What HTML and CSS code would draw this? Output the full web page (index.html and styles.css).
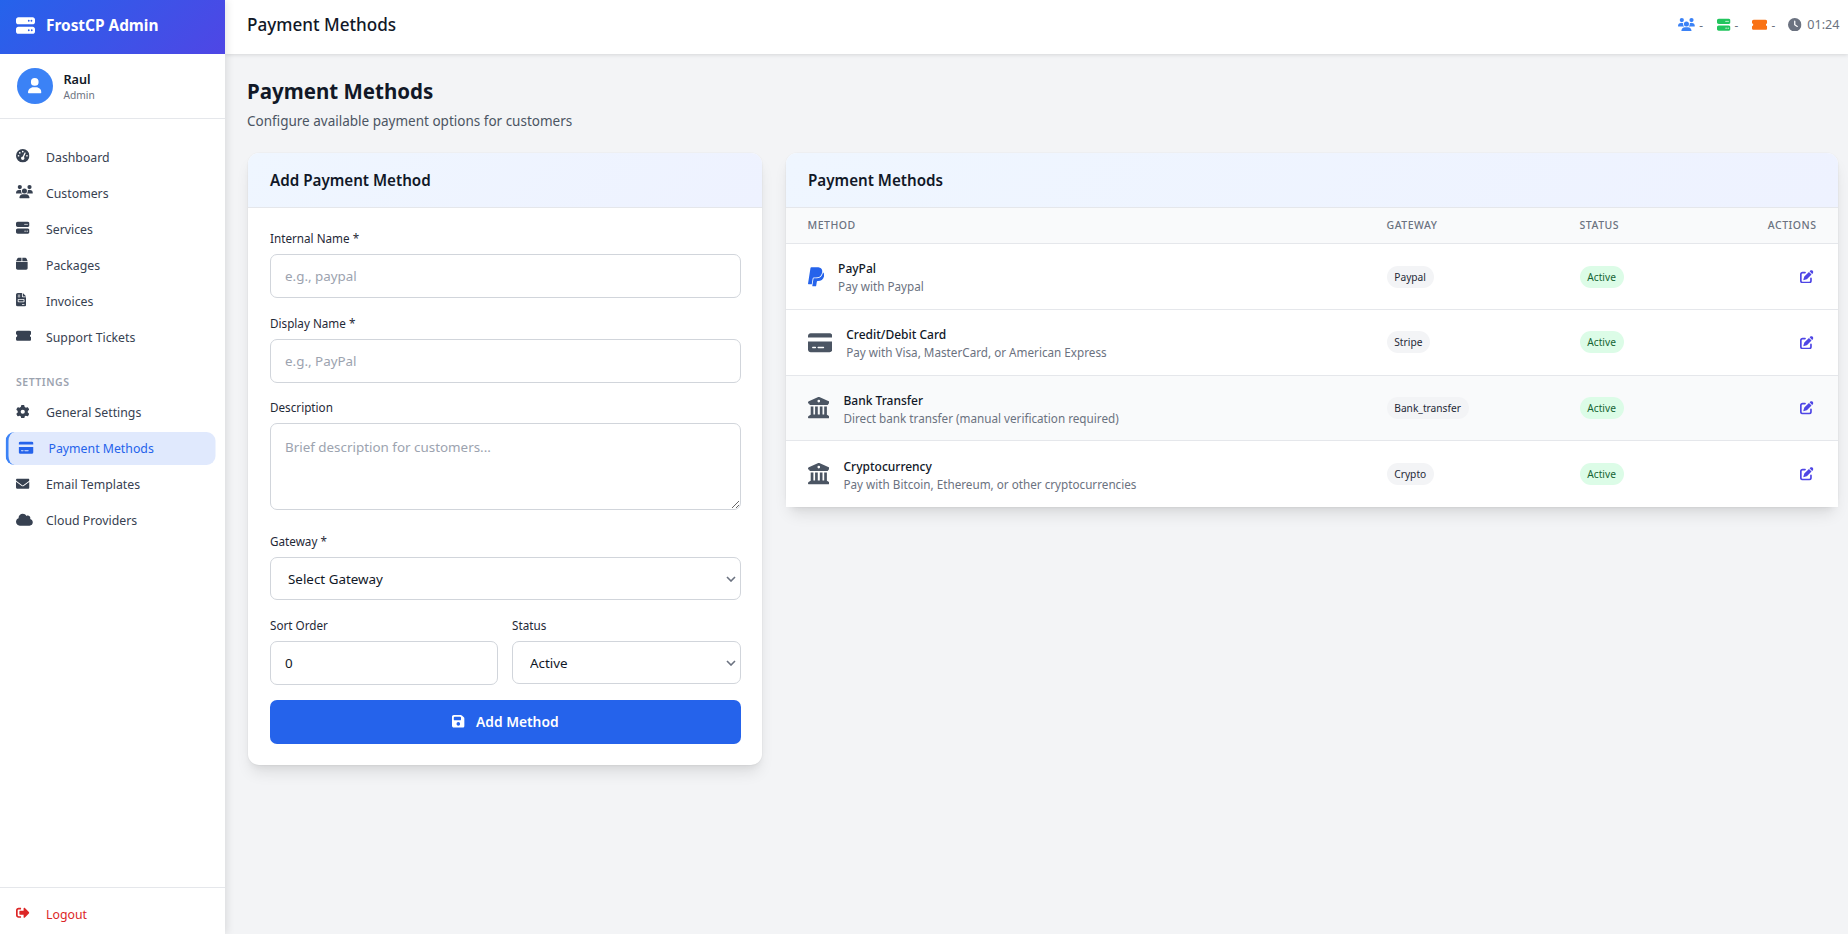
FILE: index.html
```html
<!DOCTYPE html>
<html lang="en">
<head>
<meta charset="utf-8">
<title>Payment Methods</title>
<link rel="stylesheet" href="styles.css">
</head>
<body>
<svg class="defs" aria-hidden="true">
<defs>
<symbol id="i-server" viewBox="0 0 512 512"><path d="M64 32C28.7 32 0 60.7 0 96v64c0 35.3 28.7 64 64 64H448c35.3 0 64-28.7 64-64V96c0-35.3-28.7-64-64-64H64zm280 72a24 24 0 1 1 0 48 24 24 0 1 1 0-48zm48 24a24 24 0 1 1 48 0 24 24 0 1 1 -48 0zM64 288c-35.3 0-64 28.7-64 64v64c0 35.3 28.7 64 64 64H448c35.3 0 64-28.7 64-64V352c0-35.3-28.7-64-64-64H64zm280 72a24 24 0 1 1 0 48 24 24 0 1 1 0-48zm56 24a24 24 0 1 1 48 0 24 24 0 1 1 -48 0z"/></symbol>
<symbol id="i-gauge" viewBox="0 0 512 512"><path d="M0 256a256 256 0 1 1 512 0A256 256 0 1 1 0 256zM288 96a32 32 0 1 0 -64 0 32 32 0 1 0 64 0zM256 416c35.3 0 64-28.7 64-64c0-17.4-6.9-33.1-18.1-44.6L366 161.7c5.3-12.1-.2-26.3-12.3-31.6s-26.3 .2-31.6 12.3L257.9 288c-.6 0-1.3 0-1.9 0c-35.3 0-64 28.7-64 64s28.7 64 64 64zM176 144a32 32 0 1 0 -64 0 32 32 0 1 0 64 0zM96 288a32 32 0 1 0 0-64 32 32 0 1 0 0 64zm352-32a32 32 0 1 0 -64 0 32 32 0 1 0 64 0z"/></symbol>
<symbol id="i-users" viewBox="0 0 640 512"><path d="M144 0a80 80 0 1 1 0 160A80 80 0 1 1 144 0zM512 0a80 80 0 1 1 0 160A80 80 0 1 1 512 0zM0 298.7C0 239.8 47.8 192 106.7 192h42.7c15.9 0 31 3.5 44.6 9.7c-1.3 7.2-1.9 14.7-1.9 22.3c0 38.2 16.8 72.5 43.3 96c-.2 0-.4 0-.7 0H21.3C9.6 320 0 310.4 0 298.7zM405.3 320c-.2 0-.4 0-.7 0c26.6-23.5 43.3-57.8 43.3-96c0-7.6-.7-15-1.9-22.3c13.6-6.3 28.7-9.7 44.6-9.7h42.7C592.2 192 640 239.8 640 298.7c0 11.8-9.6 21.3-21.3 21.3H405.3zM224 224a96 96 0 1 1 192 0 96 96 0 1 1 -192 0zM128 485.3C128 411.7 187.7 352 261.3 352H378.7C452.3 352 512 411.7 512 485.3c0 14.7-11.9 26.7-26.7 26.7H154.7c-14.7 0-26.7-11.9-26.7-26.7z"/></symbol>
<symbol id="i-box" viewBox="0 0 448 512"><path d="M50.7 58.5L0 160H208V32H93.7C75.5 32 58.9 42.3 50.7 58.5zM240 160H448L397.3 58.5C389.1 42.3 372.5 32 354.3 32H240V160zm208 32H0V416c0 35.3 28.7 64 64 64H384c35.3 0 64-28.7 64-64V192z"/></symbol>
<symbol id="i-invoice" viewBox="0 0 384 512"><path d="M64 0C28.7 0 0 28.7 0 64V448c0 35.3 28.7 64 64 64H320c35.3 0 64-28.7 64-64V160H256c-17.7 0-32-14.3-32-32V0H64zM256 0V128H384L256 0zM80 64h64c8.8 0 16 7.2 16 16s-7.2 16-16 16H80c-8.8 0-16-7.2-16-16s7.2-16 16-16zm0 64h64c8.8 0 16 7.2 16 16s-7.2 16-16 16H80c-8.8 0-16-7.2-16-16s7.2-16 16-16zm16 96H288c17.7 0 32 14.3 32 32v64c0 17.7-14.3 32-32 32H96c-17.7 0-32-14.3-32-32V256c0-17.7 14.3-32 32-32zm0 32v64H288V256H96zM240 416h64c8.8 0 16 7.2 16 16s-7.2 16-16 16H240c-8.8 0-16-7.2-16-16s7.2-16 16-16z"/></symbol>
<symbol id="i-ticket" viewBox="0 0 576 512"><path d="M64 64C28.7 64 0 92.7 0 128v64c0 8.8 7.4 15.7 15.7 18.6C34.5 217.1 48 235 48 256s-13.5 38.9-32.3 45.4C7.4 304.3 0 311.2 0 320v64c0 35.3 28.7 64 64 64H512c35.3 0 64-28.7 64-64V320c0-8.8-7.4-15.7-15.7-18.6C541.5 294.9 528 277 528 256s13.5-38.9 32.3-45.4c8.3-2.9 15.7-9.8 15.7-18.6V128c0-35.3-28.7-64-64-64H64z"/></symbol>
<symbol id="i-gear" viewBox="0 0 512 512"><path d="M495.9 166.6c3.2 8.7 .5 18.4-6.4 24.6l-43.3 39.4c1.1 8.3 1.7 16.8 1.7 25.4s-.6 17.1-1.7 25.4l43.3 39.4c6.9 6.2 9.6 15.9 6.4 24.6c-4.4 11.9-9.7 23.3-15.8 34.3l-4.7 8.1c-6.6 11-14 21.4-22.1 31.2c-5.9 7.2-15.7 9.6-24.5 6.8l-55.7-17.7c-13.4 10.3-28.2 18.9-44 25.4l-12.5 57.1c-2 9.1-9 16.3-18.2 17.8c-13.8 2.3-28 3.5-42.5 3.5s-28.7-1.2-42.5-3.5c-9.2-1.5-16.2-8.7-18.2-17.8l-12.5-57.1c-15.8-6.5-30.6-15.1-44-25.4L83.1 425.9c-8.8 2.8-18.6 .3-24.5-6.8c-8.1-9.8-15.5-20.2-22.1-31.2l-4.7-8.1c-6.1-11-11.4-22.4-15.8-34.3c-3.2-8.7-.5-18.4 6.4-24.6l43.3-39.4C64.6 273.1 64 264.6 64 256s.6-17.1 1.7-25.4L22.4 191.2c-6.9-6.2-9.6-15.9-6.4-24.6c4.4-11.9 9.7-23.3 15.8-34.3l4.7-8.1c6.6-11 14-21.4 22.1-31.2c5.9-7.2 15.7-9.6 24.5-6.8l55.7 17.7c13.4-10.3 28.2-18.9 44-25.4l12.5-57.1c2-9.1 9-16.3 18.2-17.8C227.3 1.2 241.5 0 256 0s28.7 1.2 42.5 3.5c9.2 1.5 16.2 8.7 18.2 17.8l12.5 57.1c15.8 6.5 30.6 15.1 44 25.4l55.7-17.7c8.8-2.8 18.6-.3 24.5 6.8c8.1 9.8 15.5 20.2 22.1 31.2l4.7 8.1c6.1 11 11.4 22.4 15.8 34.3zM256 336a80 80 0 1 0 0-160 80 80 0 1 0 0 160z"/></symbol>
<symbol id="i-card" viewBox="0 0 576 512"><path d="M64 32C28.7 32 0 60.7 0 96v32H576V96c0-35.3-28.7-64-64-64H64zM576 224H0V416c0 35.3 28.7 64 64 64H512c35.3 0 64-28.7 64-64V224zM112 352h64c8.8 0 16 7.2 16 16s-7.2 16-16 16H112c-8.8 0-16-7.2-16-16s7.2-16 16-16zm112 16c0-8.8 7.2-16 16-16H368c8.8 0 16 7.2 16 16s-7.2 16-16 16H240c-8.8 0-16-7.2-16-16z"/></symbol>
<symbol id="i-envelope" viewBox="0 0 512 512"><path d="M48 64C21.5 64 0 85.5 0 112c0 15.1 7.1 29.3 19.2 38.4L236.8 313.6c11.4 8.5 27 8.5 38.4 0L492.8 150.4c12.1-9.1 19.2-23.3 19.2-38.4c0-26.5-21.5-48-48-48H48zM0 176V384c0 35.3 28.7 64 64 64H448c35.3 0 64-28.7 64-64V176L294.4 339.2c-22.8 17.1-54 17.1-76.8 0L0 176z"/></symbol>
<symbol id="i-cloud" viewBox="0 0 640 512"><path d="M0 336c0 79.5 64.5 144 144 144H512c70.7 0 128-57.3 128-128c0-61.9-44-113.6-102.4-125.4c4.1-10.7 6.4-22.4 6.4-34.6c0-53-43-96-96-96c-19.7 0-38.1 6-53.3 16.2C367 64.2 315.3 32 256 32C167.6 32 96 103.6 96 192c0 2.7 .1 5.4 .2 8.1C40.2 219.8 0 273.2 0 336z"/></symbol>
<symbol id="i-logout" viewBox="0 0 512 512"><path d="M497 273L329 441c-15 15-41 4.5-41-17v-96H152c-13.3 0-24-10.7-24-24v-96c0-13.3 10.7-24 24-24h136V88c0-21.4 25.9-32 41-17l168 168c9.3 9.4 9.3 24.6 0 34zM192 436v-40c0-6.6-5.4-12-12-12H96c-17.7 0-32-14.3-32-32V160c0-17.7 14.3-32 32-32h84c6.6 0 12-5.4 12-12V76c0-6.6-5.4-12-12-12H96c-53 0-96 43-96 96v192c0 53 43 96 96 96h84c6.6 0 12-5.4 12-12z"/></symbol>
<symbol id="i-user" viewBox="0 0 448 512"><path d="M224 256A128 128 0 1 0 224 0a128 128 0 1 0 0 256zm-45.7 48C79.8 304 0 383.8 0 482.3C0 498.7 13.3 512 29.7 512H418.3c16.4 0 29.7-13.3 29.7-29.7C448 383.8 368.2 304 269.7 304H178.3z"/></symbol>
<symbol id="i-clock" viewBox="0 0 512 512"><path d="M256 0a256 256 0 1 1 0 512A256 256 0 1 1 256 0zM232 120V256c0 8 4 15.5 10.7 20l96 64c11 7.4 25.9 4.4 33.3-6.7s4.4-25.9-6.7-33.3L280 243.2V120c0-13.3-10.7-24-24-24s-24 10.7-24 24z"/></symbol>
<symbol id="i-save" viewBox="0 0 448 512"><path d="M64 32C28.7 32 0 60.7 0 96V416c0 35.3 28.7 64 64 64H384c35.3 0 64-28.7 64-64V173.3c0-17-6.7-33.3-18.7-45.3L352 50.7C340 38.7 323.7 32 306.7 32H64zm0 96c0-17.7 14.3-32 32-32H288c17.7 0 32 14.3 32 32v64c0 17.7-14.3 32-32 32H96c-17.7 0-32-14.3-32-32V128zM224 288a64 64 0 1 1 0 128 64 64 0 1 1 0-128z"/></symbol>
<symbol id="i-bank" viewBox="0 0 512 512"><path d="M243.4 2.6l-224 96c-14 6-21.8 21-18.7 35.8S16.8 160 32 160v8c0 13.3 10.7 24 24 24H456c13.3 0 24-10.7 24-24v-8c15.2 0 28.3-10.7 31.3-25.6s-4.8-29.9-18.7-35.8l-224-96c-8-3.4-17.2-3.4-25.2 0zM128 224H64V420.3c-.6 .3-1.2 .7-1.8 1.1l-48 32c-11.7 7.8-17 22.4-12.9 35.9S17.9 512 32 512H480c14.1 0 26.5-9.2 30.6-22.7s-1.1-28.1-12.9-35.9l-48-32c-.6-.4-1.2-.7-1.8-1.1V224H384V416H344V224H280V416H232V224H168V416H128V224zM256 64a32 32 0 1 1 0 64 32 32 0 1 1 0-64z"/></symbol>
<symbol id="i-paypal" viewBox="0 0 384 512"><path d="M111.4 295.9c-3.5 19.2-17.4 108.7-21.5 134-.3 1.8-1 2.5-3 2.5H12.3c-7.6 0-13.1-6.6-12.1-13.9L58.8 46.6c1.5-9.6 10.1-16.9 20-16.9 152.3 0 165.1-3.7 204 11.4 60.1 23.3 65.6 79.5 44 140.3-21.5 62.6-72.5 89.5-140.1 90.3-43.4 .7-69.5-7-75.3 24.2zM357.1 152c-1.8-1.3-2.5-1.8-3 1.3-2 11.4-5.1 22.5-8.8 33.6-39.9 113.8-150.5 103.9-204.5 103.9-6.1 0-10.1 3.3-10.9 9.4-22.6 140.4-27.1 169.7-27.1 169.7-1 7.1 3.5 12.9 10.6 12.9h63.5c8.6 0 15.7-6.3 17.4-14.9 .7-5.4-1.1 6.1 14.4-91.3 4.6-22 14.3-19.7 29.3-19.7 71 0 126.4-28.8 142.9-112.3 6.5-34.8 4.6-71.4-23.8-92.6z"/></symbol>
<symbol id="i-edit" viewBox="0 0 512 512"><path d="M471.6 21.7c-21.9-21.9-57.3-21.9-79.2 0L362.3 51.7l97.9 97.9 30.1-30.1c21.9-21.9 21.9-57.3 0-79.2L471.6 21.7zm-299.2 220c-6.1 6.1-10.8 13.6-13.5 21.9l-29.6 88.8c-2.9 8.6-.6 18.1 5.8 24.6s15.9 8.7 24.6 5.8l88.8-29.6c8.2-2.7 15.7-7.4 21.9-13.5L437.7 172.3 339.7 74.3 172.4 241.7zM96 64C43 64 0 107 0 160V416c0 53 43 96 96 96H352c53 0 96-43 96-96V320c0-17.7-14.3-32-32-32s-32 14.3-32 32v96c0 17.7-14.3 32-32 32H96c-17.7 0-32-14.3-32-32V160c0-17.7 14.3-32 32-32h96c17.7 0 32-14.3 32-32s-14.3-32-32-32H96z"/></symbol>
</defs>
</svg>

<aside class="sidebar">
  <div class="brand">
    <svg class="brand-icon"><use href="#i-server"/></svg>
    <span class="brand-name">FrostCP Admin</span>
  </div>
  <div class="user">
    <div class="avatar"><svg class="avatar-icon"><use href="#i-user"/></svg></div>
    <div class="user-text">
      <div class="user-name">Raul</div>
      <div class="user-role">Admin</div>
    </div>
  </div>
  <nav class="nav">
    <a class="nav-item"><span class="nav-slot"><svg class="ico w1"><use href="#i-gauge"/></svg></span>Dashboard</a>
    <a class="nav-item"><span class="nav-slot"><svg class="ico w125"><use href="#i-users"/></svg></span>Customers</a>
    <a class="nav-item"><span class="nav-slot"><svg class="ico w1"><use href="#i-server"/></svg></span>Services</a>
    <a class="nav-item"><span class="nav-slot"><svg class="ico w0875"><use href="#i-box"/></svg></span>Packages</a>
    <a class="nav-item"><span class="nav-slot"><svg class="ico w075"><use href="#i-invoice"/></svg></span>Invoices</a>
    <a class="nav-item"><span class="nav-slot"><svg class="ico w1125"><use href="#i-ticket"/></svg></span>Support Tickets</a>
    <div class="nav-section">Settings</div>
    <a class="nav-item"><span class="nav-slot"><svg class="ico w1"><use href="#i-gear"/></svg></span>General Settings</a>
    <a class="nav-item active"><span class="nav-slot"><svg class="ico w1125"><use href="#i-card"/></svg></span>Payment Methods</a>
    <a class="nav-item"><span class="nav-slot"><svg class="ico w1"><use href="#i-envelope"/></svg></span>Email Templates</a>
    <a class="nav-item"><span class="nav-slot"><svg class="ico w125"><use href="#i-cloud"/></svg></span>Cloud Providers</a>
  </nav>
  <div class="logout">
    <span class="nav-slot"><svg class="ico w1"><use href="#i-logout"/></svg></span>Logout
  </div>
</aside>

<div class="main">
  <header class="topbar">
    <div class="topbar-title">Payment Methods</div>
    <div class="stats">
      <span class="stat"><svg class="ico w125 blue"><use href="#i-users"/></svg><span>-</span></span>
      <span class="stat"><svg class="ico w1 green"><use href="#i-server"/></svg><span>-</span></span>
      <span class="stat"><svg class="ico w1125 orange"><use href="#i-ticket"/></svg><span>-</span></span>
      <span class="stat clock"><svg class="ico w1 slate"><use href="#i-clock"/></svg><span class="time">01:24</span></span>
    </div>
  </header>
  <main class="content">
    <h1 class="page-title">Payment Methods</h1>
    <p class="page-sub">Configure available payment options for customers</p>
    <div class="layout">
      <section class="card">
        <div class="card-head">Add Payment Method</div>
        <form class="form">
          <label class="label">Internal Name *</label>
          <input class="field gap" type="text" placeholder="e.g., paypal">
          <label class="label">Display Name *</label>
          <input class="field gap" type="text" placeholder="e.g., PayPal">
          <label class="label">Description</label>
          <textarea class="field area" placeholder="Brief description for customers..."></textarea>
          <label class="label">Gateway *</label>
          <select class="field sel sel-gap"><option>Select Gateway</option></select>
          <div class="row2">
            <div>
              <label class="label">Sort Order</label>
              <input class="field" type="number" value="0">
            </div>
            <div>
              <label class="label">Status</label>
              <select class="field sel"><option>Active</option></select>
            </div>
          </div>
          <button class="btn" type="button"><svg class="btn-icon"><use href="#i-save"/></svg>Add Method</button>
        </form>
      </section>
      <section class="card">
        <div class="card-head">Payment Methods</div>
        <table class="table">
          <thead>
            <tr><th class="c-method">Method</th><th class="c-gate">Gateway</th><th class="c-status">Status</th><th class="c-act">Actions</th></tr>
          </thead>
          <tbody>
            <tr>
              <td><div class="method"><svg class="m-icon paypal"><use href="#i-paypal"/></svg><div><div class="m-name">PayPal</div><div class="m-desc">Pay with Paypal</div></div></div></td>
              <td><span class="pill">Paypal</span></td>
              <td><span class="pill ok">Active</span></td>
              <td class="c-act"><svg class="edit"><use href="#i-edit"/></svg></td>
            </tr>
            <tr>
              <td><div class="method"><svg class="m-icon card-i"><use href="#i-card"/></svg><div><div class="m-name">Credit/Debit Card</div><div class="m-desc">Pay with Visa, MasterCard, or American Express</div></div></div></td>
              <td><span class="pill">Stripe</span></td>
              <td><span class="pill ok">Active</span></td>
              <td class="c-act"><svg class="edit"><use href="#i-edit"/></svg></td>
            </tr>
            <tr class="alt">
              <td><div class="method"><svg class="m-icon bank"><use href="#i-bank"/></svg><div><div class="m-name">Bank Transfer</div><div class="m-desc">Direct bank transfer (manual verification required)</div></div></div></td>
              <td><span class="pill">Bank_transfer</span></td>
              <td><span class="pill ok">Active</span></td>
              <td class="c-act"><svg class="edit"><use href="#i-edit"/></svg></td>
            </tr>
            <tr>
              <td><div class="method"><svg class="m-icon bank"><use href="#i-bank"/></svg><div><div class="m-name">Cryptocurrency</div><div class="m-desc">Pay with Bitcoin, Ethereum, or other cryptocurrencies</div></div></div></td>
              <td><span class="pill">Crypto</span></td>
              <td><span class="pill ok">Active</span></td>
              <td class="c-act"><svg class="edit"><use href="#i-edit"/></svg></td>
            </tr>
          </tbody>
        </table>
      </section>
    </div>
  </main>
</div>
</body>
</html>
```

FILE: styles.css
```css
* { box-sizing: border-box; }
html, body { height: 100%; }
body {
  margin: 0;
  display: flex;
  height: 934px;
  overflow: hidden;
  background: #f3f4f6;
  color: #111827;
  font-family: "Noto Sans", "Open Sans", sans-serif;
  font-size: 13px;
}
.defs { display: none; }
svg { fill: currentColor; display: block; }

/* sidebar */
.sidebar {
  width: 225px;
  flex: none;
  height: 934px;
  background: #fff;
  display: flex;
  flex-direction: column;
  box-shadow: 2px 0 8px rgba(0,0,0,.1);
  z-index: 2;
}
.brand {
  height: 54px;
  display: flex;
  align-items: center;
  gap: 11px;
  padding: 0 0 4px 16px;
  background: linear-gradient(135deg, #2563eb, #4f46e5);
  color: #fff;
}
.brand-icon { width: 19px; height: 19px; }
.brand-name { font-size: 15.4px; font-weight: 700; }
.user {
  height: 65px;
  display: flex;
  align-items: center;
  gap: 10.5px;
  padding-left: 17px;
  border-bottom: 1px solid #e5e7eb;
}
.avatar {
  width: 36px; height: 36px;
  border-radius: 50%;
  background: #3b82f6;
  color: #fff;
  display: flex; align-items: center; justify-content: center;
}
.avatar-icon { width: 13.5px; height: 15.5px; }
.user-text { padding-top: 2px; }
.user-name { font-size: 12.6px; font-weight: 600; line-height: 16px; color: #111827; }
.user-role { font-size: 10.2px; line-height: 15px; color: #6b7280; }

.nav { flex: 1; padding-top: 21.6px; }
.nav-item {
  display: flex;
  align-items: center;
  height: 33px;
  margin: 0 12px 3px 3px;
  padding-left: 10px;
  border-left: 3px solid transparent;
  border-radius: 9px;
  font-size: 12.3px;
  color: #374151;
}
.nav-item.active {
  transform: translateX(2.5px);
  background: #e0e9fd;
  border-left-color: #3b82f6;
  color: #2563eb;
}
.nav-slot { width: 30px; flex: none; }
.nav-slot .ico { margin-top: -2px; }
.nav-section {
  height: 39.5px;
  display: flex; align-items: center;
  padding: 11px 0 0 16px;
  font-size: 10.5px;
  font-weight: 600;
  letter-spacing: .5px;
  text-transform: uppercase;
  color: #9ca3af;
}
.logout {
  height: 47px;
  display: flex; align-items: center;
  padding: 6px 0 0 16px;
  border-top: 1px solid #e5e7eb;
  font-size: 12.3px;
  color: #dc2626;
}
.ico { height: 13.5px; }
.w075 { width: 10.2px; }
.w0875 { width: 11.8px; }
.w1 { width: 13.5px; }
.w1125 { width: 15.2px; }
.w125 { width: 16.9px; }

/* main */
.main { flex: 1; min-width: 0; display: flex; flex-direction: column; }
.topbar {
  height: 54px;
  flex: none;
  background: #fff;
  box-shadow: 0 1px 4px rgba(0,0,0,.12);
  display: flex;
  align-items: center;
  justify-content: space-between;
  padding: 0 8.5px 5px 22px;
}
.topbar-title { font-size: 17.1px; font-weight: 500; color: #111827; }
.stats { display: flex; align-items: center; gap: 14px; font-size: 11.7px; color: #6b7280; }
.stat { display: flex; align-items: center; gap: 4px; }
.clock { gap: 5.5px; margin-left: -1px; }
.time { font-size: 12.6px; }
.blue { color: #3b82f6; }
.green { color: #22c55e; }
.orange { color: #f97316; }
.slate { color: #6b7280; }

.content { padding: 20px 10px 0 23px; }
.page-title { margin: 0 0 0 -1px; font-size: 20.5px; line-height: 34px; font-weight: 700; color: #111827; }
.page-sub { margin: 2px 0 0 -1px; font-size: 13.5px; line-height: 22px; color: #4b5563; }
.layout {
  margin-top: 20.7px;
  display: grid;
  grid-template-columns: 514px 1fr;
  gap: 24px;
  align-items: start;
}
.card {
  background: #fff;
  border-radius: 11px;
  box-shadow: 0 10px 15px -3px rgba(0,0,0,.1), 0 4px 6px -2px rgba(0,0,0,.05), 0 0 0 1px rgba(0,0,0,.02);
}
.card-head {
  height: 55px;
  display: flex; align-items: center;
  padding-left: 22px;
  border-radius: 11px 11px 0 0;
  background: linear-gradient(135deg, #eff6ff, #eef2ff);
  border-bottom: 1px solid #e5e7eb;
  font-size: 15.2px;
  font-weight: 600;
  color: #111827;
}

/* form */
.form { padding: 21.6px 21px 21.6px 22px; }
.label { display: block; font-size: 11.7px; line-height: 18px; font-weight: 400; color: #1f2937; margin-bottom: 7px; }
.field {
  display: block;
  width: 100%;
  height: 44px;
  padding: 0 14px;
  border: 1px solid #d1d5db;
  border-radius: 7px;
  background: #fff;
  font-family: inherit;
  font-size: 13.4px;
  color: #111827;
  outline: 0;
}
.field::placeholder { color: #9ca3af; opacity: 1; }
.gap { margin-bottom: 15.6px; }
.sel {
  height: 43px;
  padding-left: 17px;
  appearance: none;
  background-image: url("data:image/svg+xml,%3Csvg xmlns='http://www.w3.org/2000/svg' width='10' height='6' viewBox='0 0 10 6'%3E%3Cpath d='M1 1l4 4 4-4' fill='none' stroke='%236b7280' stroke-width='1.6'/%3E%3C/svg%3E");
  background-repeat: no-repeat;
  background-position: right 4px center;
}
.sel-gap { margin-bottom: 16px; }
.area { height: 87px; padding-top: 14px; margin-bottom: 21.6px; resize: vertical; line-height: 18px; }
.row2 { display: grid; grid-template-columns: 228px 229px; gap: 14px; margin-bottom: 14.5px; }
.btn {
  width: 100%;
  height: 44px;
  display: flex; align-items: center; justify-content: center;
  gap: 11px;
  border: 0;
  border-radius: 7px;
  background: #2563eb;
  color: #fff;
  font-family: inherit;
  font-size: 13.8px;
  font-weight: 600;
}
.btn-icon { width: 12.6px; height: 14.4px; }

/* table */
.table { width: 100%; border-collapse: collapse; table-layout: fixed; }
.table th {
  height: 36px;
  padding: 0 21.6px;
  background: #f9fafb;
  border-bottom: 1px solid #e5e7eb;
  font-size: 10.5px;
  font-weight: 500;
  letter-spacing: .5px;
  text-transform: uppercase;
  text-align: left;
  color: #6b7280;
}
.c-method { width: 579px; }
.c-gate { width: 193px; }
.c-status { width: 130px; }
.table .c-act { text-align: right; }
.table td {
  height: 65.75px;
  padding: 0 21.6px;
  background: #fff;
  border-bottom: 1px solid #e5e7eb;
}
.table tr:last-child td { border-bottom: 0; }
.table .alt td { background: #f9fafb; }
.method { display: flex; align-items: center; gap: 14.3px; }
.m-icon { height: 21.6px; color: #4b5563; flex: none; }
.paypal { width: 16.2px; color: #2563eb; }
.card-i { width: 24.3px; }
.bank { width: 21.6px; }
.m-name { font-size: 12px; line-height: 19px; font-weight: 500; color: #111827; padding-top: 1px; }
.m-desc { font-size: 11.7px; line-height: 17px; color: #6b7280; }
.pill {
  display: inline-block;
  padding: 0 7.7px;
  height: 22px;
  line-height: 22px;
  border-radius: 11px;
  background: #f3f4f6;
  font-size: 10.2px;
  color: #1f2937;
}
.pill.ok { background: #dcfce7; color: #166534; }
.edit { width: 13.5px; height: 13.5px; color: #4f46e5; margin-left: auto; margin-right: 2.5px; }
```
